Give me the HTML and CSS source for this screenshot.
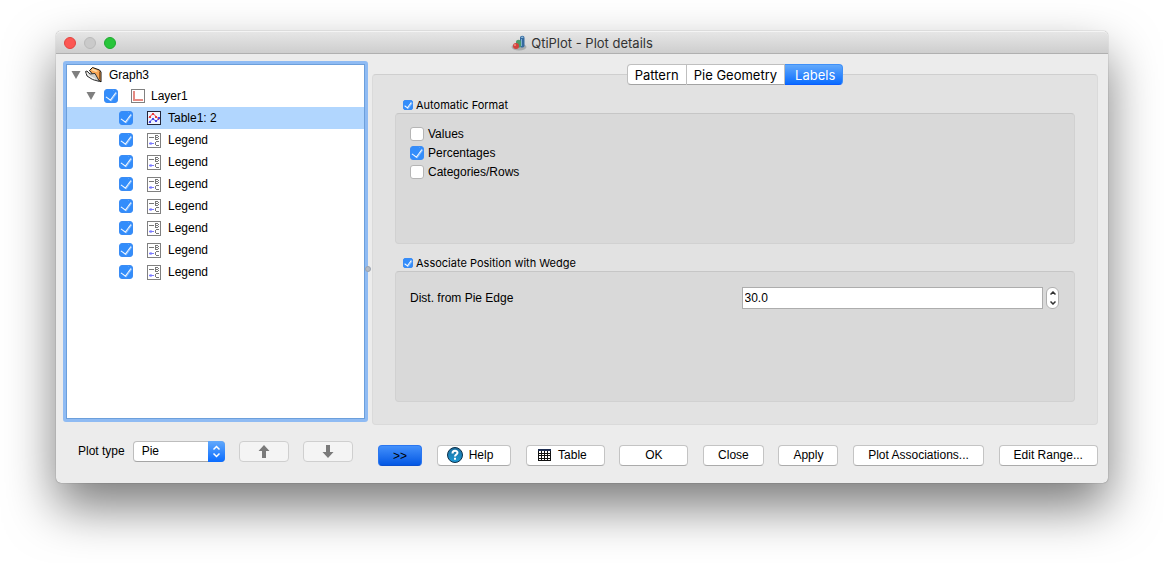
FILE: index.html
```html
<!DOCTYPE html>
<html lang="en">
<head>
  <meta charset="UTF-8">
  <title>QtiPlot - Plot details</title>
  <link rel="stylesheet" href="styles.css">
</head>
<body>

  <!-- Shared icons -->
  <svg class="sprite" aria-hidden="true">
    <symbol id="icon-legend" viewBox="0 0 14 15">
      <rect x=".5" y=".5" width="13" height="14" fill="#fff" stroke="#808080"/>
      <path d="M2 4.500h5" stroke="#777"/>
      <path d="M8.500 2v5M8 2.500h3M8 4.500h3M8 6.500h3M11.500 3v1M11.500 5v1" stroke="#777" fill="none"/>
      <path d="M12 8.500h-3M8.500 9v3M9 12.500h3" stroke="#777" fill="none"/>
      <path d="M2 10.500h5M4 9v3M3 9.500v2" stroke="#7b7bff"/>
    </symbol>
    <symbol id="icon-arrow" viewBox="0 0 10 8">
      <path d="M.5 0h9L5 8z" fill="#7f7f7f"/>
    </symbol>
  </svg>

  <main class="window">
    <header class="titlebar">
      <div class="lights">
        <button class="light close" aria-label="Close window"></button>
        <button class="light minimize" aria-label="Minimize window" disabled></button>
        <button class="light zoom" aria-label="Zoom window"></button>
      </div>
      <h1 class="title">
        <svg width="16" height="16" viewBox="0 0 16 16">
          <ellipse cx="8" cy="12" rx="7.500" ry="3.500" fill="#a9adac"/>
          <path d="M9 3c0-3 4.500-3 4.500 0v8c-1 2-4 2-4.500 0z" fill="#356a9f"/>
          <path d="M10 3c0-2 2.500-2 2.500 0z" fill="#8db8d8"/>
          <path d="M10.500 4v7" stroke="#7fb0d0"/>
          <path d="M5 7c0-3 5-3 5 0v4c-1 2-3 2-5 0z" fill="#4a9b6c"/>
          <circle cx="5" cy="11" r="3" fill="#d2443c"/>
          <circle cx="4" cy="10" r="1" fill="#f08e86"/>
        </svg>
        QtiPlot - Plot details
      </h1>
    </header>

    <div class="content">
      <section class="left">
        <ul class="tree">
          <li class="row root">
            <svg width="10" height="8"><use href="#icon-arrow"/></svg>
            <svg width="18" height="16" viewBox="0 0 18 16">
              <path d="M4.500 3.500L7.500.5l7 2.500 1.500 2v10L9 9z" fill="#f7a654" stroke="#111"/>
              <path d="M6 3l2-1.500L13 4l-2 1z" fill="#ffd9a3"/>
              <path d="M.5 4.500L2 4l3 3 5-.5 4.500 8-7-2L2 9z" fill="#d0d0cc" stroke="#333"/>
              <path d="M2 6l2 3 6 3" stroke="#fff" fill="none"/>
              <path d="M14.500 4.500v8" stroke="#9b5a1e"/>
            </svg>
            <span class="root-name">Graph3</span>
          </li>
          <li class="row layer">
            <svg class="arrow" width="10" height="8"><use href="#icon-arrow"/></svg>
            <input type="checkbox" class="check" id="layer1" checked>
            <svg width="14" height="14" viewBox="0 0 14 14">
              <rect x=".5" y=".5" width="13" height="13" fill="#fff" stroke="#808080"/>
              <path d="M3 2v9h9" stroke="#e58a82" stroke-width="2" fill="none"/>
            </svg>
            <label for="layer1">Layer1</label>
          </li>
          <li class="row item selected">
            <input type="checkbox" class="check" id="table1" checked>
            <svg width="14" height="14" viewBox="0 0 14 14">
              <rect x=".5" y=".5" width="13" height="13" fill="#eef3ff" stroke="#23263a"/>
              <path d="M2 6.500l4-4 6 6" stroke="#f03a3a" fill="none"/>
              <path d="M5 2h2v2H5zM2 5h2v2H2zM8 5h2v2H8zM11 7h1v2h-1z" fill="#f03a3a"/>
              <path d="M2 11.500l4-4 3 3 3.500-4" stroke="#4949e6" fill="none"/>
              <path d="M5 7h2v2H5zM2 10h2v2H2zM8 9h2v2H8zM11 6h2v2h-2z" fill="#4949e6"/>
            </svg>
            <label for="table1">Table1: 2</label>
          </li>
          <li class="row item">
            <input type="checkbox" class="check" id="legend1" checked>
            <svg width="14" height="15"><use href="#icon-legend"/></svg>
            <label for="legend1">Legend</label>
          </li>
          <li class="row item">
            <input type="checkbox" class="check" id="legend2" checked>
            <svg width="14" height="15"><use href="#icon-legend"/></svg>
            <label for="legend2">Legend</label>
          </li>
          <li class="row item">
            <input type="checkbox" class="check" id="legend3" checked>
            <svg width="14" height="15"><use href="#icon-legend"/></svg>
            <label for="legend3">Legend</label>
          </li>
          <li class="row item">
            <input type="checkbox" class="check" id="legend4" checked>
            <svg width="14" height="15"><use href="#icon-legend"/></svg>
            <label for="legend4">Legend</label>
          </li>
          <li class="row item">
            <input type="checkbox" class="check" id="legend5" checked>
            <svg width="14" height="15"><use href="#icon-legend"/></svg>
            <label for="legend5">Legend</label>
          </li>
          <li class="row item">
            <input type="checkbox" class="check" id="legend6" checked>
            <svg width="14" height="15"><use href="#icon-legend"/></svg>
            <label for="legend6">Legend</label>
          </li>
          <li class="row item">
            <input type="checkbox" class="check" id="legend7" checked>
            <svg width="14" height="15"><use href="#icon-legend"/></svg>
            <label for="legend7">Legend</label>
          </li>
        </ul>

        <div class="plot-type">
          <label for="plotType">Plot type</label>
          <div class="select-box">
            <select id="plotType">
              <option>Pie</option>
            </select>
            <svg class="select-arrows" width="17" height="21" viewBox="0 0 17 21">
              <path d="M5.500 8.500l3-3 3 3M5.500 12.500l3 3 3-3" stroke="#fff" stroke-width="1.500" fill="none"/>
            </svg>
          </div>
          <button class="btn move" aria-label="Move up" disabled>
            <svg width="12" height="13" viewBox="0 0 12 13"><path d="M6 0l5.500 6H8v7H4V6H.5z" fill="#7a7a7a"/></svg>
          </button>
          <button class="btn move" aria-label="Move down" disabled>
            <svg width="12" height="13" viewBox="0 0 12 13"><path d="M6 13l5.500-6H8V0H4v7H.5z" fill="#7a7a7a"/></svg>
          </button>
        </div>
        <span class="splitter"></span>
      </section>

      <section class="right">
        <div class="tabs" role="tablist">
          <button class="tab" role="tab">Pattern</button>
          <button class="tab" role="tab">Pie Geometry</button>
          <button class="tab active" role="tab" aria-selected="true">Labels</button>
        </div>

        <div class="panel">
          <div class="group">
            <div class="group-title">
              <input type="checkbox" class="check small" id="autoFormat" checked>
              <label for="autoFormat">Automatic Format</label>
            </div>
            <div class="frame options">
              <div class="option">
                <input type="checkbox" class="check" id="values">
                <label for="values">Values</label>
              </div>
              <div class="option">
                <input type="checkbox" class="check" id="percentages" checked>
                <label for="percentages">Percentages</label>
              </div>
              <div class="option">
                <input type="checkbox" class="check" id="categories">
                <label for="categories">Categories/Rows</label>
              </div>
            </div>
          </div>

          <div class="group">
            <div class="group-title">
              <input type="checkbox" class="check small" id="wedge" checked>
              <label for="wedge">Associate Position with Wedge</label>
            </div>
            <div class="frame distance">
              <label for="dist">Dist. from Pie Edge</label>
              <div class="spin">
                <input type="text" id="dist" value="30.0">
                <div class="stepper">
                  <button aria-label="Increase"><svg width="6" height="4" viewBox="0 0 6 4"><path d="M.5 3.500L3 1l2.500 2.500" stroke="#333" stroke-width="1.500" fill="none"/></svg></button>
                  <button aria-label="Decrease"><svg width="6" height="4" viewBox="0 0 6 4"><path d="M.5.5L3 3 5.500.5" stroke="#333" stroke-width="1.500" fill="none"/></svg></button>
                </div>
              </div>
            </div>
          </div>
        </div>

        <div class="buttons">
          <button class="btn primary">&gt;&gt;</button>
          <button class="btn with-icon">
            <svg width="16" height="16" viewBox="0 0 16 16">
              <defs>
                <linearGradient id="helpFill" x1="0" y1="0" x2="0" y2="1">
                  <stop offset="0" stop-color="#1b6c9c"/>
                  <stop offset="1" stop-color="#1f9bd6"/>
                </linearGradient>
              </defs>
              <circle cx="8" cy="8" r="7.500" fill="url(#helpFill)" stroke="#0c2f49"/>
              <path d="M5.500 6.500c0-3.500 5-3.300 5-.7C10.500 7.500 8 7.500 8 9.500M8 10.800v2" stroke="#fff" stroke-width="2" fill="none"/>
            </svg>
            Help
          </button>
          <button class="btn with-icon">
            <svg width="16" height="16" viewBox="0 0 16 16">
              <path d="M2 2h13v12H2z" fill="#111"/>
              <path d="M2 2h13v2H2z" fill="#1c2c50"/>
              <path d="M3 4h2v2H3zM6 4h2v2H6zM9 4h2v2H9zM12 4h2v2h-2zM3 7h2v1H3zM6 7h2v1H6zM9 7h2v1H9zM12 7h2v1h-2zM3 9h2v2H3zM6 9h2v2H6zM9 9h2v2H9zM12 9h2v2h-2zM3 12h2v1H3zM6 12h2v1H6zM9 12h2v1H9zM12 12h2v1h-2z" fill="#fff"/>
            </svg>
            Table
          </button>
          <button class="btn ok">OK</button>
          <button class="btn">Close</button>
          <button class="btn">Apply</button>
          <button class="btn">Plot Associations...</button>
          <button class="btn">Edit Range...</button>
        </div>
      </section>
    </div>
  </main>

</body>
</html>
```
FILE: styles.css
```css
* {
  box-sizing: border-box;
}

body {
  min-height: 100vh;
  margin: 0;
  padding: 31px 56px 40px;
  background: #fff;
  color: #000;
  font-family: "Liberation Sans", Helvetica, Arial, sans-serif;
  font-size: 12px;
  line-height: 14px;
}

button,
input,
select {
  margin: 0;
  padding: 0;
  color: inherit;
  font: inherit;
}

svg {
  display: block;
  flex: none;
}

.sprite {
  position: absolute;
  width: 0;
  height: 0;
}

/* Window */
.window {
  border-radius: 5px;
  background: #ececec;
  box-shadow: 0 0 1px rgba(0, 0, 0, 0.6), 0 24px 50px rgba(0, 0, 0, 0.52);
}

.titlebar {
  display: flex;
  align-items: center;
  height: 23px;
  padding: 1px 8px 0;
  border-top: 1px solid #f4f4f4;
  border-bottom: 1px solid #b0b0b0;
  border-radius: 5px 5px 0 0;
  background: linear-gradient(#e6e6e6, #cecece);
}

.lights {
  display: flex;
  flex: 1;
  gap: 8px;
}

.light {
  width: 12px;
  height: 12px;
  border: 1px solid #bababa;
  border-radius: 50%;
  background: #cacaca;
}

.light.close {
  border-color: #e2443f;
  background: #fc5753;
}

.light.zoom {
  border-color: #1ea92f;
  background: #28c53a;
}

.title {
  display: flex;
  align-items: center;
  gap: 4px;
  margin: 0;
  color: #333;
  font-family: Inter, sans-serif;
  font-size: 13px;
  font-weight: 400;
}

.titlebar::after {
  content: "";
  flex: 1;
}

.content {
  display: flex;
  gap: 4px;
  padding: 7px 10px 17px 7px;
}

/* Tree */
.left {
  display: flex;
  flex-direction: column;
  flex: none;
  position: relative;
  width: 305px;
  padding-bottom: 4px;
}

.tree {
  flex: 1;
  margin: 0 0 19px;
  padding: 0;
  border: 3px solid #8fbbf3;
  border-radius: 3px;
  background: #fff;
  box-shadow: inset 0 0 0 1px #6c9fdb;
  list-style: none;
}

.row {
  display: flex;
  align-items: center;
  height: 22px;
  margin: 0 1px;
}

.row.root {
  gap: 4px;
  padding-left: 4px;
}

.root-name {
  padding-left: 2px;
}

.row.layer {
  gap: 6px;
  height: 21px;
  padding-bottom: 1px;
  padding-left: 19px;
}

.row.item {
  gap: 7px;
  padding-left: 52px;
}

.row.selected {
  background: #b1d6fe;
}

.arrow {
  margin-right: 2px;
}

.row .check {
  margin-right: 7px;
}

.splitter {
  position: absolute;
  top: 205px;
  right: -3px;
  width: 6px;
  height: 6px;
  border: 1px solid #9aa3b0;
  border-radius: 50%;
  background: #b4bac4;
}

/* Checkboxes */
.check {
  display: flex;
  align-items: center;
  justify-content: center;
  flex: none;
  width: 14px;
  height: 14px;
  border: 1px solid #b5b5b5;
  border-radius: 3px;
  background: #fff;
  appearance: none;
}

.check:checked {
  border-color: #3a8cf5;
  background: #338dfb;
}

.check:checked::after {
  content: "";
  width: 5px;
  height: 9px;
  margin-top: -2px;
  border: solid #fff;
  border-width: 0 1px 1px 0;
  box-shadow: 1px 0 0 rgba(255, 255, 255, 0.4);
  transform: rotate(36deg);
}

.check.small {
  width: 10px;
  height: 10px;
  border-radius: 2px;
}

.check.small:checked::after {
  width: 3px;
  height: 6px;
}

/* Plot type row */
.plot-type {
  display: flex;
  align-items: center;
  gap: 14px;
  padding: 0 15px;
}

.plot-type label {
  margin-right: -6px;
  padding-bottom: 1px;
  white-space: nowrap;
}

.select-box {
  flex: 1;
  position: relative;
}

.select-box select {
  display: block;
  width: 100%;
  height: 21px;
  padding: 0 20px 1px 8px;
  border: 1px solid #bdbdbd;
  border-bottom-color: #a5a5a5;
  border-radius: 4px;
  background: #fff;
  appearance: none;
}

.select-arrows {
  position: absolute;
  top: 0;
  right: 0;
  border-radius: 0 4px 4px 0;
  background: linear-gradient(#62a9fb, #0a6cff);
  pointer-events: none;
}

/* Buttons */
.btn {
  display: flex;
  align-items: center;
  justify-content: center;
  height: 21px;
  padding: 0 14px 1px;
  border: 1px solid #c4c4c4;
  border-bottom-color: #ababab;
  border-radius: 4px;
  background: #fff;
  white-space: nowrap;
}

.btn.move {
  width: 50px;
  border-color: #cfcfcf;
  background: #f4f4f4;
}

.btn.primary {
  padding-bottom: 0;
  border-color: #2a76f0;
  border-bottom-color: #0a50d0;
  background: linear-gradient(#4390fb, #0458e4);
}

.btn.with-icon {
  gap: 6px;
  padding: 0 17px 1px 9px;
}

.btn.ok {
  min-width: 69px;
}

.buttons {
  display: flex;
  justify-content: space-between;
  margin-top: 20px;
  padding-left: 6px;
}

/* Tabs */
.right {
  flex: 1;
  min-width: 0;
  padding-top: 3px;
}

.tabs {
  display: flex;
  justify-content: center;
  position: relative;
  margin-bottom: -11px;
}

.tab {
  height: 21px;
  padding: 0 7px;
  border: 1px solid #bfbfbf;
  border-bottom-color: #a3a3a3;
  border-left-width: 0;
  background: #fff;
  font-family: Inter, sans-serif;
  font-size: 13px;
}

.tab:first-child {
  border-left-width: 1px;
  border-radius: 4px 0 0 4px;
}

.tab.active {
  padding: 0 7px 0 10px;
  border-color: #3f90f8;
  border-bottom-color: #0a5cff;
  border-radius: 0 4px 4px 0;
  background: linear-gradient(#62a9fb, #0a6cff);
  color: #fff;
}

/* Panel */
.panel {
  display: flex;
  flex-direction: column;
  gap: 11px;
  padding: 22px;
  border: 1px solid #dadada;
  border-top-color: #cfcfcf;
  border-radius: 4px;
  background: #e2e2e2;
}

.group-title {
  display: flex;
  align-items: center;
  gap: 3px;
  height: 16px;
  padding-left: 8px;
  font-family: Inter, sans-serif;
  font-size: 11px;
}

.frame {
  min-height: 131px;
  border: 1px solid #d1d1d1;
  border-top-color: #c6c6c6;
  border-radius: 4px;
  background: #d9d9d9;
}

.options {
  padding: 10px 14px;
}

.option {
  display: flex;
  align-items: center;
  gap: 4px;
  height: 19px;
}

.distance {
  display: grid;
  grid-template-columns: 1fr 1fr;
  align-items: center;
  align-content: start;
  gap: 14px;
  padding: 15px 15px 15px 14px;
}

.spin {
  display: flex;
  align-items: center;
  gap: 3px;
}

.spin input {
  flex: 1;
  min-width: 0;
  height: 22px;
  padding: 0 2px;
  border: 1px solid #adadad;
  background: #fff;
}

.stepper {
  display: flex;
  flex-direction: column;
  width: 13px;
  height: 22px;
  border: 1px solid #b0b0b0;
  border-radius: 6px;
  background: #fff;
}

.stepper button {
  display: flex;
  align-items: center;
  justify-content: center;
  flex: 1;
  border: 0;
  background: none;
}
```
